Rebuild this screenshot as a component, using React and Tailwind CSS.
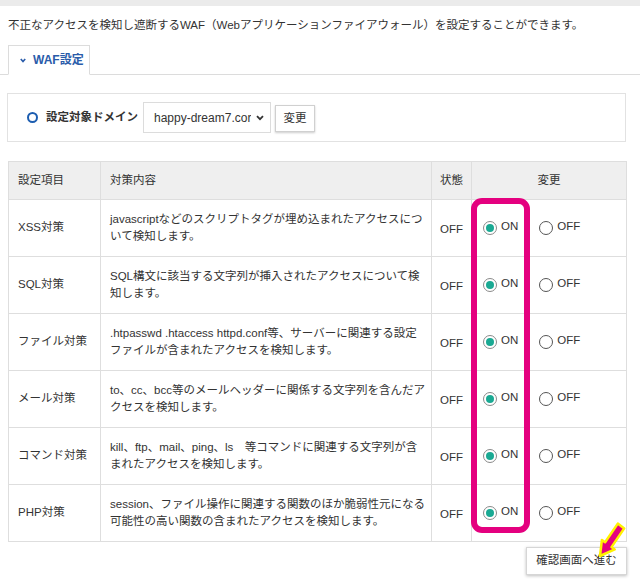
import React from 'react';

const rows = [
  { name: 'XSS対策', desc: ['javascriptなどのスクリプトタグが埋め込まれたアクセスにつ', 'いて検知します。'] },
  { name: 'SQL対策', desc: ['SQL構文に該当する文字列が挿入されたアクセスについて検', '知します。'] },
  { name: 'ファイル対策', desc: ['.htpasswd .htaccess httpd.conf等、サーバーに関連する設定', 'ファイルが含まれたアクセスを検知します。'] },
  { name: 'メール対策', desc: ['to、cc、bcc等のメールヘッダーに関係する文字列を含んだア', 'クセスを検知します。'] },
  { name: 'コマンド対策', desc: ['kill、ftp、mail、ping、ls　等コマンドに関連する文字列が含', 'まれたアクセスを検知します。'] },
  { name: 'PHP対策', desc: ['session、ファイル操作に関連する関数のほか脆弱性元になる', '可能性の高い関数の含まれたアクセスを検知します。'] },
];

const Radio = ({ checked, label }) => (
  <label className="flex items-center gap-[4px]">
    <span
      className={
        checked
          ? 'w-[14px] h-[14px] rounded-full border border-[#8a8a8a] bg-white flex items-center justify-center'
          : 'w-[14px] h-[14px] rounded-full border border-[#555] bg-white flex items-center justify-center'
      }
    >
      {checked && <span className="w-[8px] h-[8px] rounded-full bg-[#1aa993]" />}
    </span>
    <span className="-mt-[3px]">{label}</span>
  </label>
);

export default function App() {
  return (
    <div className="relative w-[640px] h-[586px] overflow-hidden bg-white text-[#333] text-[11.5px] font-['Liberation_Sans','Noto_Sans_CJK_JP',sans-serif] flex flex-col">
      <div className="h-[6px] bg-[#ebebeb]" />

      <p className="mt-[11px] ml-[8px] leading-[16px] whitespace-nowrap">
        不正なアクセスを検知し遮断するWAF（Webアプリケーションファイアウォール）を設定することができます。
      </p>

      {/* tab */}
      <div className="mt-[12px] border-b border-[#dcdcdc] flex">
        <div className="ml-[8px] -mb-px h-[30px] w-[82px] border border-[#dcdcdc] border-b-white bg-white flex items-center pl-[11px] gap-[7px] text-[#2a5caa] font-bold text-[12px]">
          <svg width="6" height="5" viewBox="0 0 6 5" className="mt-[1px]">
            <path d="M0.8 1 L3 3.6 L5.2 1" stroke="#2a5caa" strokeWidth="1.6" fill="none" />
          </svg>
          <span>WAF設定</span>
        </div>
      </div>

      {/* domain */}
      <div className="mt-[18px] ml-[7px] w-[619px] h-[49px] border border-[#e2e2e2] flex items-center">
        <span className="ml-[19px] w-[11px] h-[11px] rounded-full border-[2.5px] border-[#1c5db0]" />
        <span className="ml-[8px] font-bold">設定対象ドメイン</span>
        <div className="ml-[5px] w-[128px] h-[31px] border border-[#dcdcdc] flex items-center pl-[10px] pr-[6px] justify-between">
          <span className="text-[12px] whitespace-nowrap overflow-hidden">happy-dream7.cor</span>
          <svg width="8" height="6" viewBox="0 0 8 6">
            <path d="M1 1.2 L4 4.2 L7 1.2" stroke="#333" strokeWidth="1.8" fill="none" />
          </svg>
        </div>
        <button className="ml-[4px] mt-[2px] w-[40px] h-[27px] border border-[#d0d0d0] bg-white shadow-[0_1px_2px_rgba(0,0,0,0.2)] flex items-center justify-center">
          変更
        </button>
      </div>

      {/* table */}
      <table className="mt-[19px] ml-[8px] w-[618px] table-fixed border-collapse">
        <colgroup>
          <col className="w-[92px]" />
          <col className="w-[331px]" />
          <col className="w-[40px]" />
          <col className="w-[155px]" />
        </colgroup>
        <thead>
          <tr className="h-[38px] bg-[#efefef]">
            <th className="border border-[#dedede] text-left font-normal pl-[9px]">設定項目</th>
            <th className="border border-[#dedede] text-left font-normal pl-[9px]">対策内容</th>
            <th className="border border-[#dedede] text-left font-normal pl-[8px]">状態</th>
            <th className="border border-[#dedede] text-center font-normal">変更</th>
          </tr>
        </thead>
        <tbody>
          {rows.map((r) => (
            <tr key={r.name} className="h-[57px]">
              <td className="border border-[#dedede] pl-[9px] whitespace-nowrap">{r.name}</td>
              <td className="border border-[#dedede] pl-[9px] pr-[2px] leading-[17px] whitespace-nowrap">
                {r.desc[0]}
                <br />
                {r.desc[1]}
              </td>
              <td className="border border-[#dedede] pl-[8px] pt-[3px]">OFF</td>
              <td className="border border-[#dedede] pl-[11px]">
                <div className="flex items-center gap-[21px]">
                  <Radio checked label="ON" />
                  <Radio label="OFF" />
                </div>
              </td>
            </tr>
          ))}
        </tbody>
      </table>

      <button className="mt-[5px] self-end mr-[13px] w-[101px] h-[28px] border border-[#d6d6d6] bg-white shadow-[0_1px_3px_rgba(0,0,0,0.25)] flex items-center justify-center">
        確認画面へ進む
      </button>

      {/* highlight annotation */}
      <div className="absolute left-[471px] top-[198px] w-[59px] h-[335px] border-[6px] border-[#e4007f] rounded-[11px]" />

      {/* arrow annotation */}
      <svg className="absolute left-[590px] top-[518px]" width="42" height="46" viewBox="0 0 42 46">
        <polygon
          points="27.8,5.6 34.2,10.4 21.5,29.1 24.7,31.4 10,38 11.9,22 15.1,24.3"
          fill="#e4007f"
          stroke="#fff200"
          strokeWidth="2.5"
          strokeLinejoin="round"
        />
      </svg>
    </div>
  );
}
